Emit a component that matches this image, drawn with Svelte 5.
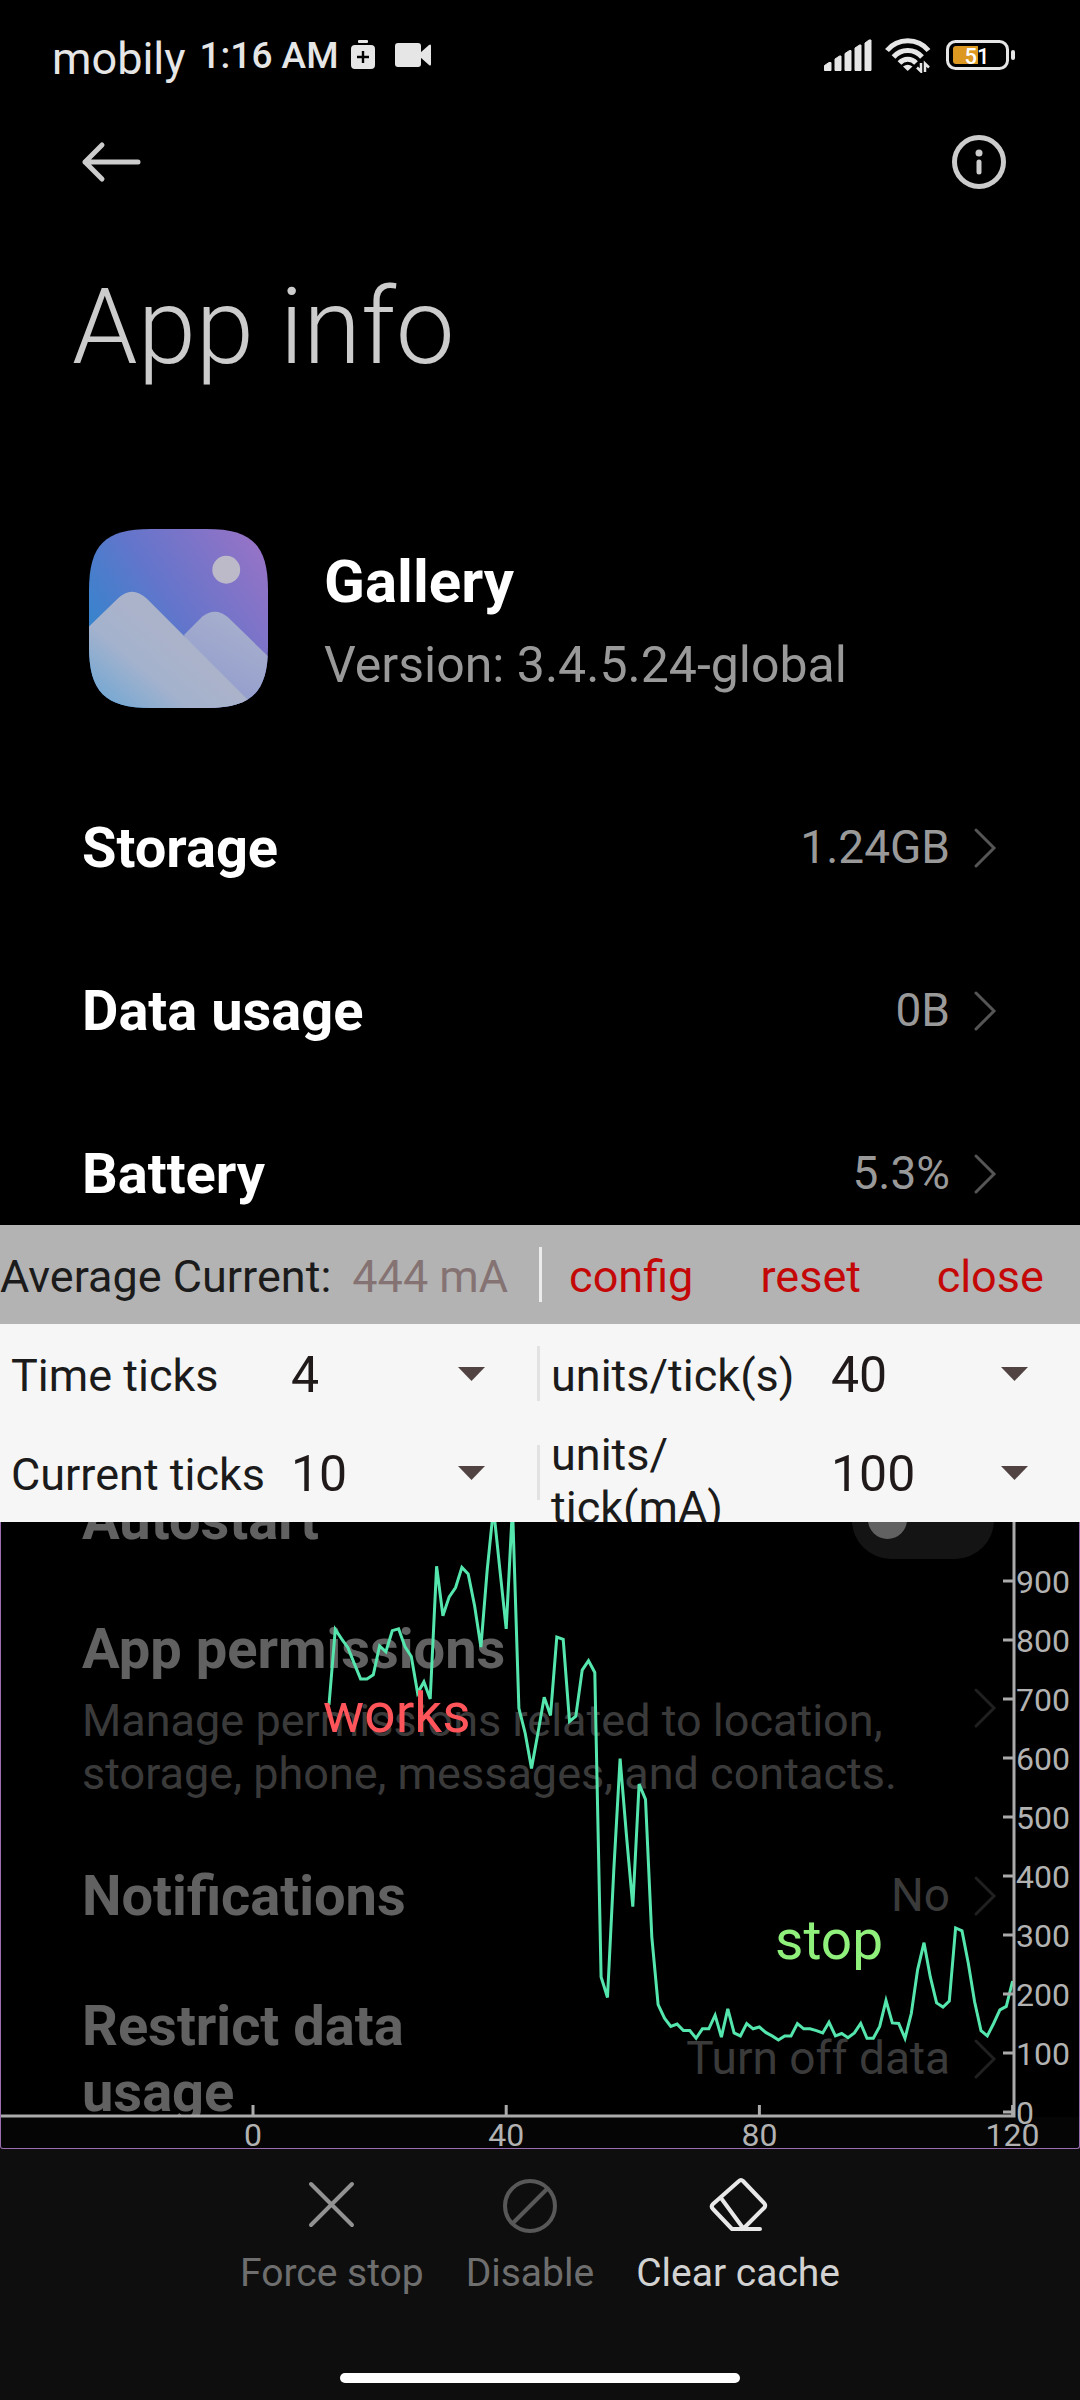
<script lang="ts">
	type Row = { label: string; value: string };

	const usageRows: Row[] = [
		{ label: 'Storage', value: '1.24GB' },
		{ label: 'Data usage', value: '0B' },
		{ label: 'Battery', value: '5.3%' }
	];

	const settingRows: Row[] = [
		{ label: 'Notifications', value: 'No' },
		{ label: 'Restrict data usage', value: 'Turn off data' }
	];

	let autostart = $state(false);
	let configOpen = $state(true);
	let timeTicks = $state(4);
	let currentTicks = $state(10);
	let secondsPerTick = $state(40);
	let currentPerTick = $state(100);

	// one sample per second, in mA
	const firstSample = 12;
	const samples = [
		690, 818, 802, 787, 760, 734, 734, 741, 790, 780, 816, 819, 789, 772, 710, 729, 700, 925, 841,
		873, 889, 923, 912, 858, 788, 919, 1023, 919, 819, 1026, 684, 642, 582, 642, 703, 672, 805, 801,
		662, 671, 749, 765, 745, 229, 194, 410, 599, 468, 348, 556, 530, 297, 182, 159, 145, 149, 138,
		138, 125, 141, 141, 164, 127, 175, 134, 129, 150, 141, 144, 135, 129, 122, 129, 129, 150, 141,
		141, 138, 134, 152, 129, 133, 126, 134, 150, 125, 125, 145, 189, 151, 150, 125, 167, 241, 287,
		229, 185, 178, 188, 312, 307, 252, 187, 138, 129, 150, 173, 179, 222
	];

	const toX = (t: number) => 253 + t * 6.33;
	const toY = (mA: number) => 590 - mA * 0.59;

	const points = samples
		.map((mA, i) => `${toX(firstSample + i).toFixed(1)},${toY(mA).toFixed(1)}`)
		.join(' ');

	const xTicks = $derived(Array.from({ length: timeTicks }, (_, i) => i * secondsPerTick));
	const yTicks = $derived(Array.from({ length: currentTicks }, (_, i) => i * currentPerTick));
</script>

{#snippet chevron()}
	<svg class="chevron" viewBox="0 0 24 42" fill="none" stroke="currentColor" stroke-width="3" stroke-linecap="round">
		<path d="M3 3 21 21 3 39" />
	</svg>
{/snippet}

{#snippet caret()}
	<svg class="caret" viewBox="0 0 27 14" fill="currentColor">
		<path d="M0 0h27L13.5 14z" />
	</svg>
{/snippet}

<div class="screen">
	<div class="status-bar">
		<div class="status-left">
			<span class="carrier">mobily</span>
			<span class="clock">1:16 AM</span>
			<svg class="saver" viewBox="0 0 24 30" fill="currentColor">
				<rect x="7" y="0" width="10" height="3" rx="1" />
				<path
					fill-rule="evenodd"
					d="M4 5h16a4 4 0 0 1 4 4v16a4 4 0 0 1-4 4H4a4 4 0 0 1-4-4V9a4 4 0 0 1 4-4zm6.800 6v4.800H6v2.400h4.800V23h2.400v-4.800H18v-2.400h-4.800V11z"
				/>
			</svg>
			<svg class="camera" viewBox="0 0 36 24" fill="currentColor">
				<rect width="26" height="24" rx="3" />
				<path d="M25 10 34 2q2-1.500 2 1v18q0 2.500-2 1l-9-8z" />
			</svg>
		</div>
		<div class="status-right">
			<svg class="signal" viewBox="0 0 48 32" fill="currentColor" stroke="currentColor" stroke-linejoin="round">
				<path d="M.5 31.500v-5L5 23.500h2v8zM11 31.500V20l4.500-3h1.500v14.500zM21 31.500v-17l4.500-3H27v20zM31 31.500V9l4.500-3H37v25.500zM41 31.500V4l4-3h2v30.500z" />
			</svg>
			<svg class="wifi" viewBox="0 0 48 36" fill="none" stroke="currentColor" stroke-width="5">
				<path d="M2 13.500A27 27 0 0 1 43.500 13.500M8.500 20A19 19 0 0 1 37 20M14.500 26a11 11 0 0 1 16.500 0" />
				<path d="M18 29.500q4.700-3.500 9.500 0L22.700 34z" fill="currentColor" stroke="none" />
				<path d="M36 26v8.500l-4-4M40 35v-8.500l4 4" stroke-width="2.500" />
			</svg>
			<svg class="battery" viewBox="0 0 70 30">
				<rect x="1.500" y="1.500" width="60" height="27" rx="8" fill="none" stroke="currentColor" stroke-width="3" />
				<rect x="65" y="10" width="4" height="10" rx="2" fill="currentColor" />
				<path d="M10 6h22v18H10a3 3 0 0 1-3-3V9a3 3 0 0 1 3-3z" fill="#dc9820" />
				<text x="31" y="24" text-anchor="middle">51</text>
			</svg>
		</div>
	</div>

	<div class="toolbar">
		<button class="icon-btn" aria-label="Back">
			<svg viewBox="0 0 60 60" fill="none" stroke="currentColor" stroke-width="5" stroke-linecap="round" stroke-linejoin="round">
				<path d="M21 13 4 30l17 17M4 30h53" />
			</svg>
		</button>
		<button class="icon-btn" aria-label="Details">
			<svg viewBox="0 0 60 60" fill="none" stroke="currentColor" stroke-width="5" stroke-linecap="round">
				<circle cx="30" cy="30" r="24.500" />
				<path d="M30 30v10" />
				<circle cx="30" cy="21" r="3.500" fill="currentColor" stroke="none" />
			</svg>
		</button>
	</div>

	<main class="content">
		<h1>App info</h1>

		<div class="app-head">
			<svg class="app-icon" viewBox="0 0 180 180">
				<defs>
					<linearGradient id="sky" x1="0" y1="0.600" x2="0.900" y2="0">
						<stop offset="0" stop-color="#3385cd" />
						<stop offset="0.450" stop-color="#6375cb" />
						<stop offset="1" stop-color="#9673c6" />
					</linearGradient>
					<linearGradient id="front" x1="0" y1="1" x2="0.600" y2="0.500">
						<stop offset="0" stop-color="#68a5d4" />
						<stop offset="0.600" stop-color="#a4b2cd" />
						<stop offset="1" stop-color="#abb3ca" />
					</linearGradient>
					<linearGradient id="back" x1="0.800" y1="0" x2="0.300" y2="1">
						<stop offset="0" stop-color="#aab2cd" />
						<stop offset="1" stop-color="#8f99cd" />
					</linearGradient>
					<clipPath id="tile">
						<path d="M0 62C0 16 16 0 62 0h56c46 0 62 16 62 62v56c0 46-16 62-62 62H62c-46 0-62-16-62-62z" />
					</clipPath>
				</defs>
				<g clip-path="url(#tile)">
					<rect width="180" height="180" fill="url(#sky)" />
					<circle cx="138" cy="41" r="14" fill="#bcb9c9" />
					<path d="M96 106 114 88q13-10 26 1l40 39v52H90z" fill="url(#back)" />
					<path d="M0 98 29 70q14-14 29 0L168 180H0z" fill="url(#front)" />
				</g>
			</svg>
			<div class="app-text">
				<h2>Gallery</h2>
				<p class="version">Version: 3.4.5.24-global</p>
			</div>
		</div>

		<section>
			{#each usageRows as row}
				<button class="row">
					<span class="row-label">{row.label}</span>
					<span class="row-value">{row.value}</span>
					{@render chevron()}
				</button>
			{/each}
		</section>

		<section class="settings">
			<label class="row">
				<span class="row-label">Autostart</span>
				<input class="toggle" type="checkbox" role="switch" bind:checked={autostart} />
			</label>
			<button class="row tall">
				<span class="row-text">
					<span class="row-title">App permissions</span>
					<span class="row-sub">Manage permissions related to location, storage, phone, messages, and contacts.</span>
				</span>
				{@render chevron()}
			</button>
			{#each settingRows as row}
				<button class="row">
					<span class="row-label">{row.label}</span>
					<span class="row-value">{row.value}</span>
					{@render chevron()}
				</button>
			{/each}
		</section>
	</main>

	<footer class="actions">
		<div class="action-list">
			<button class="action">
				<svg viewBox="0 0 60 60" fill="none" stroke="#929292" stroke-width="4" stroke-linecap="round">
					<path d="M9 8 50 49M50 8 9 49" />
				</svg>
				Force stop
			</button>
			<button class="action">
				<svg viewBox="0 0 60 60" fill="none" stroke="#585858" stroke-width="4">
					<circle cx="30" cy="30" r="25" />
					<path d="M12.500 47.500 47.500 12.500" />
				</svg>
				Disable
			</button>
			<button class="action active">
				<svg viewBox="0 0 60 60" fill="none" stroke="#e8e8e8" stroke-width="4" stroke-linecap="round" stroke-linejoin="round">
					<path d="M31 5q2-2 4 0l21 22q2.500 2.500 0 5L35 53H24L5 33q-2.500-2.500 0-5zM13 22l22 30M24 53h28" />
				</svg>
				Clear cache
			</button>
		</div>
		<div class="home-bar"></div>
	</footer>

	<div class="monitor">
		<div class="monitor-head">
			<div class="average">
				<span>Average Current:</span>
				<span class="reading">444 mA</span>
			</div>
			<span class="divider light"></span>
			<div class="monitor-actions">
				<button onclick={() => (configOpen = !configOpen)}>config</button>
				<button>reset</button>
				<button>close</button>
			</div>
		</div>

		{#if configOpen}
			<div class="config">
				<div class="field">
					<label for="time-ticks">Time ticks</label>
					<span class="picker">
						<select id="time-ticks" bind:value={timeTicks}>
							<option value={4}>4</option>
						</select>
						{@render caret()}
					</span>
					<span class="divider"></span>
				</div>
				<div class="field">
					<label for="time-units">units/tick(s)</label>
					<span class="picker">
						<select id="time-units" bind:value={secondsPerTick}>
							<option value={40}>40</option>
						</select>
						{@render caret()}
					</span>
				</div>
				<div class="field">
					<label for="current-ticks">Current ticks</label>
					<span class="picker">
						<select id="current-ticks" bind:value={currentTicks}>
							<option value={10}>10</option>
						</select>
						{@render caret()}
					</span>
					<span class="divider"></span>
				</div>
				<div class="field">
					<label for="current-units"><span>units/<wbr />tick(mA)</span></label>
					<span class="picker">
						<select id="current-units" bind:value={currentPerTick}>
							<option value={100}>100</option>
						</select>
						{@render caret()}
					</span>
				</div>
			</div>
		{/if}

		<div class="chart">
			<svg viewBox="1 0 1078 626" role="img" aria-label="Current over time">
				<polyline class="trace" {points} />
				<path class="axis" d="M0 594H1015.500M1014 0V595.500" />
				{#each xTicks as t}
					<path class="axis" d="M{toX(t)} 583v11" />
					<text class="tick" x={toX(t)} y="624" text-anchor="middle">{t}</text>
				{/each}
				{#each yTicks as mA}
					<path class="axis" d="M1003 {toY(mA)}h11" />
					<text class="tick" x="1016" y={toY(mA) + 12}>{mA}</text>
				{/each}
				<text class="note works" x="323" y="210">works</text>
				<text class="note stop" x="775" y="437">stop</text>
			</svg>
		</div>
	</div>
</div>

<style>
	:global(body) {
		background: #000;
	}

	.screen {
		position: relative;
		display: flex;
		flex-direction: column;
		height: 100vh;
		overflow: hidden;
		background: #000;
		color: #fff;
		font-family: Roboto, 'Liberation Sans', sans-serif;
	}

	button {
		padding: 0;
		border: none;
		background: none;
		color: inherit;
		font: inherit;
		text-align: left;
		cursor: pointer;
	}

	svg {
		display: block;
		flex-shrink: 0;
	}

	.status-bar {
		display: flex;
		align-items: center;
		justify-content: space-between;
		height: 110px;
		padding: 0 64px 0 52px;
		color: #e6e6e6;
	}

	.status-left,
	.status-right {
		display: flex;
		align-items: center;
	}

	.carrier {
		margin-right: 14px;
		padding-top: 6px;
		font-size: 45px;
	}

	.clock {
		margin-right: 12px;
		font-size: 37px;
		font-weight: 500;
	}

	.saver {
		width: 24px;
		height: 30px;
		margin-right: 20px;
	}

	.camera {
		width: 36px;
		height: 24px;
	}

	.signal {
		width: 48px;
		height: 32px;
	}

	.wifi {
		width: 48px;
		height: 36px;
		margin: 0 13px;
	}

	.battery {
		width: 70px;
		height: 30px;
	}

	.battery text {
		fill: #fff;
		font-size: 22px;
		font-weight: 500;
	}

	.toolbar {
		display: flex;
		align-items: center;
		justify-content: space-between;
		height: 104px;
		padding: 0 71px 0 81px;
		color: #ccc;
	}

	.icon-btn svg {
		width: 60px;
		height: 60px;
	}

	.content {
		flex: 1;
		min-height: 0;
		overflow: hidden;
	}

	h1 {
		margin: 52px 72px 0;
		color: #ccc;
		font-size: 105px;
		font-weight: 300;
		line-height: 124px;
	}

	.app-head {
		display: flex;
		align-items: center;
		gap: 56px;
		padding: 139px 89px 58px;
	}

	.app-icon {
		width: 179px;
		height: 179px;
	}

	.app-text {
		padding-top: 5px;
	}

	h2 {
		margin: 0;
		font-size: 60px;
		font-weight: 700;
		line-height: 76px;
	}

	.version {
		margin: 12px 0 0;
		color: #999;
		font-size: 50px;
		line-height: 66px;
	}

	.row {
		display: flex;
		align-items: center;
		gap: 23px;
		width: 100%;
		box-sizing: border-box;
		min-height: 163px;
		padding: 0 83px 0 82px;
	}

	.row.tall {
		min-height: 213px;
	}

	.row-label {
		max-width: 50%;
		margin-right: auto;
	}

	.row-label,
	.row-title {
		font-size: 56px;
		font-weight: 700;
		line-height: 66px;
	}

	.row-text {
		display: flex;
		flex-direction: column;
		flex: 1;
		gap: 12px;
	}

	.row-value,
	.row-sub {
		color: #999;
		font-size: 46px;
		line-height: 53px;
	}

	.row-sub {
		font-size: 45px;
	}

	.chevron {
		width: 24px;
		height: 42px;
		color: #555;
	}

	.settings {
		margin-top: 183px;
	}

	.toggle {
		display: flex;
		align-items: center;
		width: 142px;
		height: 78px;
		margin: 0 3px 0 0;
		padding: 0 16px;
		box-sizing: border-box;
		border-radius: 39px;
		background: #353535;
		appearance: none;
	}

	.toggle::before {
		content: '';
		width: 39px;
		height: 39px;
		border-radius: 50%;
		background: #fff;
	}

	.toggle:checked::before {
		margin-left: auto;
	}

	.actions {
		display: flex;
		flex-direction: column;
		align-items: center;
		justify-content: space-between;
		height: 283px;
		padding: 59px 0 17px;
		box-sizing: border-box;
		background: #0e0e0e;
	}

	.action-list {
		display: flex;
		gap: 42px;
	}

	.action {
		display: flex;
		flex-direction: column;
		align-items: center;
		gap: 14px;
		color: #6e6e6e;
		font-size: 39px;
		line-height: 46px;
	}

	.action.active {
		color: #d2d2d2;
	}

	.action svg {
		width: 60px;
		height: 60px;
	}

	.home-bar {
		width: 37%;
		height: 10px;
		border-radius: 5px;
		background: #fff;
	}

	/* floating window drawn over the settings page */
	.monitor {
		position: absolute;
		top: 1225px;
		left: 0;
		right: 0;
		color: #1c1b1b;
		font-size: 45px;
		line-height: 53px;
	}

	.monitor-head {
		display: flex;
		align-items: center;
		height: 99px;
		background: #b3b3b3;
	}

	.average {
		display: flex;
		flex: 1;
		gap: 21px;
		padding-top: 4px;
	}

	.reading {
		color: #857373;
	}

	.divider {
		width: 3px;
		height: 55px;
		background: #e2e2e2;
	}

	.divider.light {
		background: #ececec;
	}

	.monitor-actions {
		display: grid;
		grid-template-columns: repeat(3, 1fr);
		flex: 1;
		padding-top: 4px;
		color: #c40808;
	}

	.monitor-actions button {
		text-align: center;
	}

	.config {
		display: grid;
		grid-template-columns: 1fr 1fr;
		background: #f6f6f6;
	}

	.field {
		display: flex;
		align-items: center;
		height: 99px;
		overflow: hidden;
	}

	.field label {
		display: flex;
		align-items: center;
		align-self: flex-start;
		width: 268px;
		min-height: 92px;
		margin-top: 5px;
		padding-left: 11px;
	}

	.picker {
		position: relative;
		display: flex;
		align-items: center;
		flex: 1;
	}

	select {
		width: 100%;
		padding: 3px 0 0 12px;
		border: none;
		background: none;
		color: #211a1a;
		font: inherit;
		font-size: 50px;
		line-height: 60px;
		appearance: none;
	}

	.caret {
		position: absolute;
		right: 52px;
		width: 27px;
		height: 14px;
		color: #524343;
		pointer-events: none;
	}

	.chart {
		border: 1px solid #9a6cb0;
		border-top: none;
		border-radius: 0 0 3px 3px;
		background: rgba(0, 0, 0, 0.62);
	}

	.chart svg {
		width: 100%;
		height: auto;
	}

	.axis {
		fill: none;
		stroke: #aaa;
		stroke-width: 3;
	}

	.tick {
		fill: #b2b2b2;
		font-size: 32px;
	}

	.trace {
		fill: none;
		stroke: #55e6ae;
		stroke-width: 3;
	}

	.note {
		font-size: 55px;
	}

	.works {
		fill: #ff5459;
	}

	.stop {
		fill: #8ff07b;
	}
</style>
